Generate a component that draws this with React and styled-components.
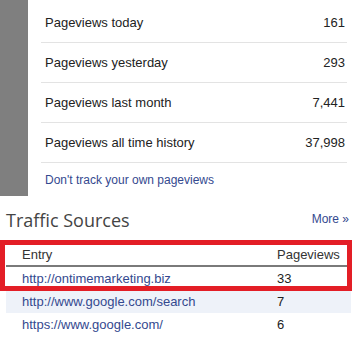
import React from "react";
import styled, { createGlobalStyle } from "styled-components";

const GlobalStyle = createGlobalStyle`
  body {
    margin: 0;
    background: #fff;
    font-family: "Liberation Sans", Arial, sans-serif;
  }
`;

const stats = [
  { label: "Pageviews today", value: "161" },
  { label: "Pageviews yesterday", value: "293" },
  { label: "Pageviews last month", value: "7,441" },
  { label: "Pageviews all time history", value: "37,998" },
];

const sources = [
  { entry: "http://ontimemarketing.biz", views: "33" },
  { entry: "http://www.google.com/search", views: "7" },
  { entry: "https://www.google.com/", views: "6" },
];

const Page = styled.div`
  width: 356px;
  height: 347px;
  overflow: hidden;
`;

const Top = styled.div`
  display: flex;
  height: 196px;
`;

const Sidebar = styled.div`
  width: 28px;
  background: #7f7f7f;
`;

const StatsBox = styled.div`
  width: 306px;
  margin-left: 13px;
  padding-top: 3px;
`;

const StatRow = styled.div`
  display: flex;
  justify-content: space-between;
  align-items: center;
  height: 39px;
  border-bottom: 1px solid #e3e3e3;
  padding: 0 2px 0 4px;
  font-size: 13px;
  color: #222;
`;

const TrackLink = styled.a`
  display: block;
  padding: 10px 0 0 4px;
  font-size: 12px;
  color: #34498f;
  text-decoration: none;
`;

const HeadingBar = styled.div`
  display: flex;
  justify-content: space-between;
  align-items: flex-end;
  padding: 12px 7px 0 6px;
`;

const Heading = styled.h2`
  margin: 0;
  font-family: "Open Sans", sans-serif;
  font-weight: normal;
  font-size: 18px;
  line-height: 24px;
  color: #444;
`;

const MoreLink = styled.a`
  font-size: 12px;
  color: #34498f;
  text-decoration: none;
  margin-bottom: 6px;
`;

const TableWrap = styled.div`
  position: relative;
  margin-top: 11px;
  padding: 0 5px 0 6px;
`;

const Table = styled.div`
  display: flex;
  flex-direction: column;
  font-size: 13px;
`;

const Row = styled.div`
  display: grid;
  grid-template-columns: 271px 1fr;
  align-items: center;
  height: ${(p) => (p.head ? "22px" : "23px")};
  border-bottom: ${(p) => (p.head ? "2px solid #7a7a7a" : "none")};
  background: ${(p) => (p.shaded ? "#eef2f9" : "transparent")};
  color: ${(p) => (p.head ? "#333" : "#222")};
`;

const EntryCell = styled.span`
  padding-left: 16px;
  color: ${(p) => (p.link ? "#34498f" : "inherit")};
`;

const Highlight = styled.div`
  position: absolute;
  left: 0;
  top: -3px;
  width: 342px;
  height: 41px;
  border: 5px solid #e31e26;
`;

export default function App() {
  return (
    <Page>
      <GlobalStyle />
      <Top>
        <Sidebar />
        <StatsBox>
          {stats.map((s) => (
            <StatRow key={s.label}>
              <span>{s.label}</span>
              <span>{s.value}</span>
            </StatRow>
          ))}
          <TrackLink href="#">Don't track your own pageviews</TrackLink>
        </StatsBox>
      </Top>
      <HeadingBar>
        <Heading>Traffic Sources</Heading>
        <MoreLink href="#">More »</MoreLink>
      </HeadingBar>
      <TableWrap>
        <Table>
          <Row head>
            <EntryCell>Entry</EntryCell>
            <span>Pageviews</span>
          </Row>
          {sources.map((s, i) => (
            <Row key={s.entry} shaded={i % 2 === 1}>
              <EntryCell link>{s.entry}</EntryCell>
              <span>{s.views}</span>
            </Row>
          ))}
        </Table>
        <Highlight />
      </TableWrap>
    </Page>
  );
}
